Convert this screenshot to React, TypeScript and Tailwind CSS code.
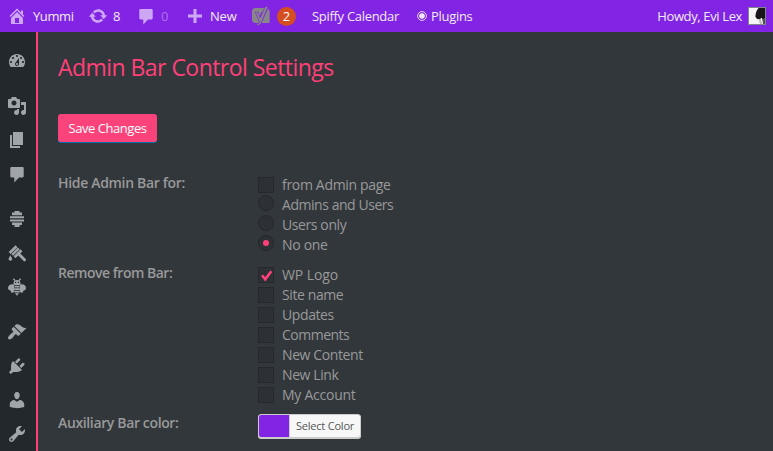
import React from "react";

const paths = {
  home: "M16 8.5l1.53 1.53-1.06 1.06L10 4.6l-6.47 6.49-1.06-1.06L10 2.5l4 4v-2h2v4zm-6-2.46l6 5.99V18H4v-5.97zM12 17v-5H8v5h4z",
  update: "M10.2 3.28c3.53 0 6.43 2.61 6.92 6h2.08l-3.5 4-3.5-4h2.32c-.45-1.97-2.21-3.45-4.32-3.45-1.45 0-2.73.71-3.54 1.78L4.95 5.66C6.23 4.2 8.11 3.28 10.2 3.28zm-.4 13.44c-3.52 0-6.43-2.61-6.92-6H.8l3.5-4c1.17 1.33 2.33 2.67 3.5 4H5.48c.45 1.97 2.21 3.45 4.32 3.45 1.45 0 2.73-.71 3.54-1.78l1.71 1.95c-1.28 1.46-3.15 2.38-5.25 2.38z",
  comments: "M4.500 3h11c.7 0 1.200.5 1.200 1.200v8.100c0 .7-.5 1.200-1.200 1.200H12L7.300 18.500v-5H4.500c-.7 0-1.200-.5-1.200-1.200V4.200C3.300 3.500 3.800 3 4.500 3z",
  plus: "M17 8.500v3h-5.500V17h-3v-5.500H3v-3h5.500V3h3v5.500z",
  dashboard: "M3.76 16h12.48c1.1-1.37 1.76-3.11 1.76-5 0-4.42-3.58-8-8-8s-8 3.58-8 8c0 1.89.66 3.63 1.76 5zM10 4c.55 0 1 .45 1 1s-.45 1-1 1-1-.45-1-1 .45-1 1-1zM6 6c.55 0 1 .45 1 1s-.45 1-1 1-1-.45-1-1 .45-1 1-1zm8 0c.55 0 1 .45 1 1s-.45 1-1 1-1-.45-1-1 .45-1 1-1zm-5.37 5.55L12 7v6c0 1.1-.9 2-2 2s-2-.9-2-2c0-.57.24-1.08.63-1.45zM4 10c.55 0 1 .45 1 1s-.45 1-1 1-1-.45-1-1 .45-1 1-1zm12 0c.55 0 1 .45 1 1s-.45 1-1 1-1-.45-1-1 .45-1 1-1zm-5 3c0-.55-.45-1-1-1s-1 .45-1 1 .45 1 1 1 1-.45 1-1z",
  media: "M13 11V4c0-.55-.45-1-1-1h-1.67L9 1H5L3.67 3H2c-.55 0-1 .45-1 1v7c0 .55.45 1 1 1h10c.55 0 1-.45 1-1zM7 4.5c1.38 0 2.5 1.12 2.5 2.5S8.38 9.5 7 9.5 4.5 8.38 4.5 7 5.62 4.5 7 4.5zM14 6h5v10.500c0 1.380-1.120 2.500-2.500 2.500S14 17.880 14 16.500s1.120-2.500 2.500-2.500c.17 0 .34.02.5.05V9h-3V6zm-4 8.050V13h2v3.500c0 1.380-1.120 2.500-2.500 2.500S7 17.880 7 16.500 8.120 14 9.500 14c.17 0 .34.02.5.05z",
  page: "M6 15V2h10v13H6zm-1 1h8v2H3V5h2v11z",
  hive: "M7.500 2h5v1.500H15v2.700H5V3.500h2.500zM3 7.200h14v2.100H3zM3 10.400h14v2.100H3zM5 13.600h10v2.500h-2.500V18h-5v-1.900H5z",
  appearance: "M14.48 11.06L7.41 3.99l1.5-1.5c.5-.56 2.3-.47 3.51.32 1.21.8 1.43 1.28 2.91 2.1 1.18.64 2.45 1.26 4.45.85zm-.71.71L6.7 4.7 4.93 6.47c-.39.39-.39 1.02 0 1.41l1.06 1.06c.39.39.39 1.03 0 1.42-.6.6-1.43 1.11-2.21 1.69-.35.26-.7.53-1.01.84C1.43 14.23.4 16.08 1.4 17.07c.99 1 2.84-.03 4.18-1.36.31-.31.58-.66.85-1.02.57-.78 1.08-1.61 1.69-2.21.39-.39 1.02-.39 1.41 0l1.06 1.06c.39.39 1.02.39 1.41 0z",
  plugins: "M13.11 4.36L9.87 7.6 8 5.73l3.24-3.24c.35-.34 1.05-.2 1.56.32.52.51.66 1.21.31 1.55zm-8 1.77l.91-1.12 9.01 9.01-1.19.84c-.71.71-2.63 1.16-3.82 1.16H6.14L4.9 17.26c-.59.59-1.54.59-2.12 0-.59-.58-.59-1.53 0-2.12l1.24-1.24v-3.88c0-1.13.4-3.19 1.09-3.89zm7.26 3.97l3.24-3.24c.34-.35 1.04-.21 1.55.31.52.51.66 1.21.31 1.55l-3.24 3.25z",
  users: "M10 9.25c-2.27 0-2.73-3.44-2.73-3.44C7 4.02 7.82 2 9.97 2c2.16 0 2.98 2.02 2.71 3.81 0 0-.41 3.44-2.68 3.44zm0 2.57L12.72 10c2.39 0 4.52 2.33 4.52 4.53v2.49s-3.65 1.13-7.24 1.13c-3.65 0-7.24-1.13-7.24-1.13v-2.49c0-2.25 1.94-4.48 4.47-4.48z",
  tools: "M16.68 9.77c-1.34 1.34-3.3 1.67-4.95.99l-5.41 6.52c-.99.99-2.59.99-3.58 0s-.99-2.59 0-3.57l6.52-5.42c-.68-1.65-.35-3.61.99-4.95 1.28-1.28 3.12-1.62 4.72-1.06l-2.89 2.89 2.82 2.82 2.86-2.87c.53 1.58.18 3.39-1.08 4.65zM3.81 16.21c.4.39 1.04.39 1.43 0 .4-.4.4-1.04 0-1.43-.39-.4-1.03-.4-1.43 0-.39.39-.39 1.03 0 1.43z",
};

function Icon({ name, className = "" }: { name: keyof typeof paths; className?: string }) {
  return (
    <svg viewBox="0 0 20 20" className={`block size-5 shrink-0 fill-current ${className}`}>
      <path d={paths[name]} fillRule="evenodd" />
    </svg>
  );
}

function WideBrush() {
  return (
    <svg viewBox="0 0 20 20" className="block size-5 fill-none stroke-current">
      <path d="M2.700 10 9.500 3.200" strokeWidth="2.800" />
      <path d="M5.200 12 11.800 5.400" strokeWidth="2.400" />
      <path d="M7.500 14.300 14.500 7.300" strokeWidth="2.800" />
      <path d="M11.500 10.800 17.500 16.800" strokeWidth="3" strokeLinecap="round" />
      <path d="M3.300 12.200c.6 1.500 1.900 2.600 1.900 3.900 0 2.100-3.600 2.100-3.600 0 0-1.300 1.200-2.400 1.700-3.900z" className="fill-current stroke-none" />
    </svg>
  );
}

function Bee() {
  return (
    <svg viewBox="0 0 20 20" className="block size-5 fill-current">
      <path d="M6.300 1.700 8.300 3.800M13.700 1.700 11.700 3.800" stroke="currentColor" strokeWidth="1.300" fill="none" />
      <path d="M6.500 6.500C6 1.800 14 1.800 13.500 6.500L12.300 8H7.700zM7.300 7.700C4 6.500 1 8.500 1 11c0 2.600 2.400 2 2.800 3.300.6 2.500 3 1.800 3.500-.8zM12.700 7.700C16 6.500 19 8.500 19 11c0 2.600-2.400 2-2.800 3.300-.6 2.500-3 1.800-3.500-.8z" />
      <path d="M7.700 8.700h4.600v1.700H7.700zM7.300 11.200h5.400v1.700H7.300zM7.300 13.700h5.400v1.700H7.300zM8 16.200h4L10 18.800z" />
      <path d="M8 5.300h1.200M10.800 5.300H12" stroke="#23282d" strokeWidth="1.200" />
    </svg>
  );
}

function Yoast() {
  return (
    <svg viewBox="0 0 18 20" className="block h-5 w-[18px] shrink-0">
      <path d="M3.500 2h9.700l-1.900 4H9.500L7.800 10.500 6.300 6H3.200l3.900 9.500-.7 1.500H3.500C1.200 17 0 15.700 0 13.500v-8C0 3.200 1.200 2 3.500 2zM16 2.700c1.100.7 1.600 1.700 1.600 3V17H9.500z" fill="#888888" />
      <path d="M13.300.5h2.800L9.500 16.300C8.600 18.500 7.300 19.500 4.600 19.500V17.800c1.600 0 2.400-.5 2.800-1.800L3.200 6h3l2 5.800z" fill="#888888" stroke="#8224e3" strokeWidth=".6" />
    </svg>
  );
}

function Avatar() {
  return (
    <svg viewBox="0 0 18 18" className="block size-[18px]">
      <rect width="18" height="18" fill="#82878c" />
      <rect x="1" y="1" width="16" height="16" fill="#f5f5f5" />
      <path d="M10.500 1H17v10.500l-2.500 1.200-.7-2-2.300 1.500-2.500-.2-1.700-2.500.5-3 1-3z" fill="#17171b" />
      <path d="M10.500 12.500 13 12l1 5h-2z" fill="#bcbcbc" />
      <path d="M14.500 12.700 17 11.500V17h-2z" fill="#4d4d52" />
    </svg>
  );
}

function Sidebar() {
  return (
    <aside className="flex h-[419px] w-[38px] shrink-0 flex-col items-center gap-[11px] border-r-2 border-[#ff4079] bg-[#23282d] pt-[19px] pr-[2px] text-[#a0a5aa]">
      <Icon name="dashboard" />
      <div className="flex flex-col gap-3.5 pt-3.5">
        <Icon name="media" />
        <Icon name="page" />
        <Icon name="comments" />
      </div>
      <div className="flex flex-col gap-3.5 pt-3.5">
        <Icon name="hive" />
        <WideBrush />
        <Bee />
      </div>
      <div className="flex flex-col gap-3.5 pt-3.5">
        <Icon name="appearance" />
        <Icon name="plugins" />
        <Icon name="users" />
        <Icon name="tools" />
      </div>
    </aside>
  );
}

type Kind = "checkbox" | "radio";

function Option({ label, kind = "checkbox", checked = false, tracking = "tracking-[-0.4px]" }: { label: string; kind?: Kind; checked?: boolean; tracking?: string }) {
  return (
    <label className="flex h-5 items-center gap-2">
      <span
        className={`flex size-4 shrink-0 items-center justify-center border border-[#25292d] bg-[#2d3136] ${
          kind === "radio" ? "-mt-1 rounded-full" : ""
        }`}
      >
        {checked && kind === "radio" && <span className="size-1.5 rounded-full bg-[#ff4079]" />}
        {checked && kind === "checkbox" && (
          <svg viewBox="0 0 14 14" className="size-3.5">
            <path d="M3 7.300 6.200 11.300 12.300 3.300" fill="none" stroke="#ff4079" strokeWidth="2.600" />
          </svg>
        )}
      </span>
      <span className={`whitespace-nowrap ${tracking}`}>{label}</span>
    </label>
  );
}

export default function App() {
  return (
    <div className="h-[451px] w-[773px] overflow-hidden bg-[#32373c] font-['Open_Sans','Noto_Sans',sans-serif] text-[14px] text-[#999999]">
      <header className="flex h-8 items-center bg-[#8224e3] pr-[7px] pl-[7px] text-[13px] leading-8 whitespace-nowrap text-[#f1ebf8]">
        <Icon name="home" className="text-[#cda7f4]" />
        <span className="ml-1.5 w-[55px] tracking-[-0.4px]">Yummi</span>
        <Icon name="update" className="text-[#cda7f4]" />
        <span className="ml-[5px] w-[23px]">8</span>
        <Icon name="comments" className="text-[#cda7f4]" />
        <span className="ml-[5px] w-6 text-[#ad70ed]">0</span>
        <Icon name="plus" className="text-[#cda7f4]" />
        <span className="ml-[5px] w-[42px] tracking-[-0.2px]">New</span>
        <Yoast />
        <span className="ml-[7px] flex size-[19px] items-center justify-center rounded-full bg-[#d54e21] leading-none text-white">2</span>
        <span className="ml-4 w-[105px] tracking-[-0.3px]">Spiffy Calendar</span>
        <span className="flex items-center gap-1 tracking-[-0.3px]">
          <svg viewBox="0 0 10 10" className="size-2.5">
            <circle cx="5" cy="5" r="4.400" fill="none" stroke="currentColor" strokeWidth=".9" />
            <circle cx="5" cy="5" r="2.800" fill="currentColor" />
          </svg>
          Plugins
        </span>
        <span className="mr-1.5 ml-auto tracking-[-0.37px]">Howdy, Evi Lex</span>
        <Avatar />
      </header>
      <div className="flex">
        <Sidebar />
        <main className="flex flex-1 flex-col items-start pt-[19px] pl-5">
          <h1 className="h-8 text-[23px] leading-8 tracking-[-0.54px] whitespace-nowrap text-[#ff4079]">Admin Bar Control Settings</h1>
          <button className="mt-[31px] h-7 w-[99px] rounded-[3px] bg-[#fb437b] text-[13px] leading-7 font-medium tracking-[-0.45px] whitespace-nowrap text-white shadow-[0_1px_0_#0073aa]">
            Save Changes
          </button>
          <section className="mt-[33px] flex leading-5">
            <h2 className="w-[200px] leading-4 font-semibold tracking-[-0.32px]">Hide Admin Bar for:</h2>
            <div>
              <Option label="from Admin page" tracking="tracking-[-0.32px]" />
              <Option label="Admins and Users" kind="radio" tracking="tracking-[-0.45px]" />
              <Option label="Users only" kind="radio" />
              <Option label="No one" kind="radio" checked tracking="tracking-[-0.3px]" />
            </div>
          </section>
          <section className="mt-2.5 flex leading-5">
            <h2 className="w-[200px] leading-4 font-semibold tracking-[-0.48px]">Remove from Bar:</h2>
            <div>
              <Option label="WP Logo" checked tracking="tracking-[-0.1px]" />
              <Option label="Site name" />
              <Option label="Updates" />
              <Option label="Comments" tracking="tracking-[-0.5px]" />
              <Option label="New Content" />
              <Option label="New Link" />
              <Option label="My Account" tracking="tracking-[-0.25px]" />
            </div>
          </section>
          <section className="mt-[9px] flex">
            <h2 className="w-[200px] leading-[18px] font-semibold tracking-[-0.36px]">Auxiliary Bar color:</h2>
            <button className="flex h-6 w-[103px] overflow-hidden rounded-[3px] border border-[#cccccc] bg-[#f7f7f7] shadow-[0_1px_0_#cccccc]">
              <span className="h-full w-[30px] bg-[#8224e3]" />
              <span className="flex-1 border-l border-[#cccccc] text-[11px] leading-[22px] tracking-[-0.2px] whitespace-nowrap text-[#555555]">Select Color</span>
            </button>
          </section>
        </main>
      </div>
    </div>
  );
}
